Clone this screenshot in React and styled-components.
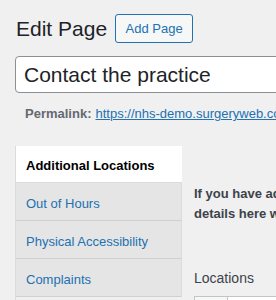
import React from 'react'
import styled, { createGlobalStyle } from 'styled-components'

const Global = createGlobalStyle`
  html, body {
    margin: 0;
    padding: 0;
    background: #f0f0f1;
    overflow: hidden;
  }
  body {
    font-family: "Liberation Sans", Arial, sans-serif;
    color: #1d2327;
  }
`

const Wrap = styled.div`
  width: 276px;
  height: 300px;
  overflow: hidden;
  padding-left: 15px;
  box-sizing: border-box;
`

const Header = styled.div`
  display: flex;
  align-items: center;
  gap: 8px;
  height: 56px;
`

const Title = styled.h1`
  margin: 0 0 0 1px;
  font-size: 21px;
  font-weight: 400;
  color: #1d2327;
  line-height: 29px;
`

const AddButton = styled.button`
  font-family: inherit;
  font-size: 13px;
  color: #2271b1;
  background: #f6f7f7;
  border: 1px solid #2271b1;
  border-radius: 3px;
  height: 29px;
  width: 78px;
  padding: 0;
  cursor: pointer;
`

const TitleInput = styled.input`
  display: block;
  width: 330px;
  height: 37px;
  box-sizing: border-box;
  border: 1px solid #8c8f94;
  border-radius: 4px;
  background: #fff;
  padding: 0 8px;
  font-family: inherit;
  font-size: 21px;
  color: #1d2327;
  outline: none;
`

const Permalink = styled.div`
  display: flex;
  gap: 4px;
  padding: 13px 0 0 10px;
  height: 40px;
  box-sizing: border-box;
  font-size: 13px;
  color: #646970;
  white-space: nowrap;
  strong { font-weight: 700; }
  a { color: #2271b1; text-decoration: underline; }
`

const Meta = styled.div`
  display: flex;
  gap: 12px;
  margin-top: 13px;
`

const Tabs = styled.ul`
  list-style: none;
  margin: 0;
  padding: 0;
  width: 166px;
  flex: none;
  border-left: 1px solid #dcdcde;
`

const Tab = styled.li`
  height: 37px;
  box-sizing: border-box;
  display: flex;
  align-items: center;
  padding: 3px 0 0 10px;
  font-size: 13px;
  white-space: nowrap;
  background: ${p => (p.active ? '#fff' : '#e5e5e5')};
  color: ${p => (p.active ? '#000' : '#2271b1')};
  font-weight: ${p => (p.active ? 700 : 400)};
  border-bottom: 1px solid ${p => (p.active ? '#dcdcde' : '#d0d0d0')};
  border-right: ${p => (p.active ? 'none' : '1px solid #dcdcde')};
  & + & { height: 38px; }
`

const Content = styled.div`
  padding-top: 38px;
  white-space: nowrap;
`

const Intro = styled.p`
  margin: 0;
  font-size: 13px;
  font-weight: 700;
  line-height: 20px;
  color: #3c434a;
`

const Label = styled.h4`
  margin: 46px 0 0;
  font-size: 14px;
  font-weight: 400;
  color: #3c434a;
`

const LocTable = styled.div`
  display: flex;
  margin-top: 10px;
  height: 30px;
  border: 1px solid #c3c4c7;
  background: #fff;
  width: 200px;
`

const LocCell = styled.div`
  width: 32px;
  background: #f6f7f7;
  border-right: 1px solid #c3c4c7;
`

export default function App() {
  const tabs = ['Additional Locations', 'Out of Hours', 'Physical Accessibility', 'Complaints']
  return (
    <>
      <Global />
      <Wrap>
        <Header>
          <Title>Edit Page</Title>
          <AddButton>Add Page</AddButton>
        </Header>
        <TitleInput defaultValue="Contact the practice" />
        <Permalink>
          <strong>Permalink:</strong>
          <a href="#">https://nhs-demo.surgeryweb.co.uk/contact-the-practice/</a>
        </Permalink>
        <Meta>
          <Tabs>
            {tabs.map((t, i) => (
              <Tab key={t} active={i === 0}>{t}</Tab>
            ))}
          </Tabs>
          <Content>
            <Intro>
              If you have additional surgery locations, please add the
              <br />
              details here with their addresses and opening hours.
            </Intro>
            <Label>Locations</Label>
            <LocTable>
              <LocCell />
            </LocTable>
          </Content>
        </Meta>
      </Wrap>
    </>
  )
}
